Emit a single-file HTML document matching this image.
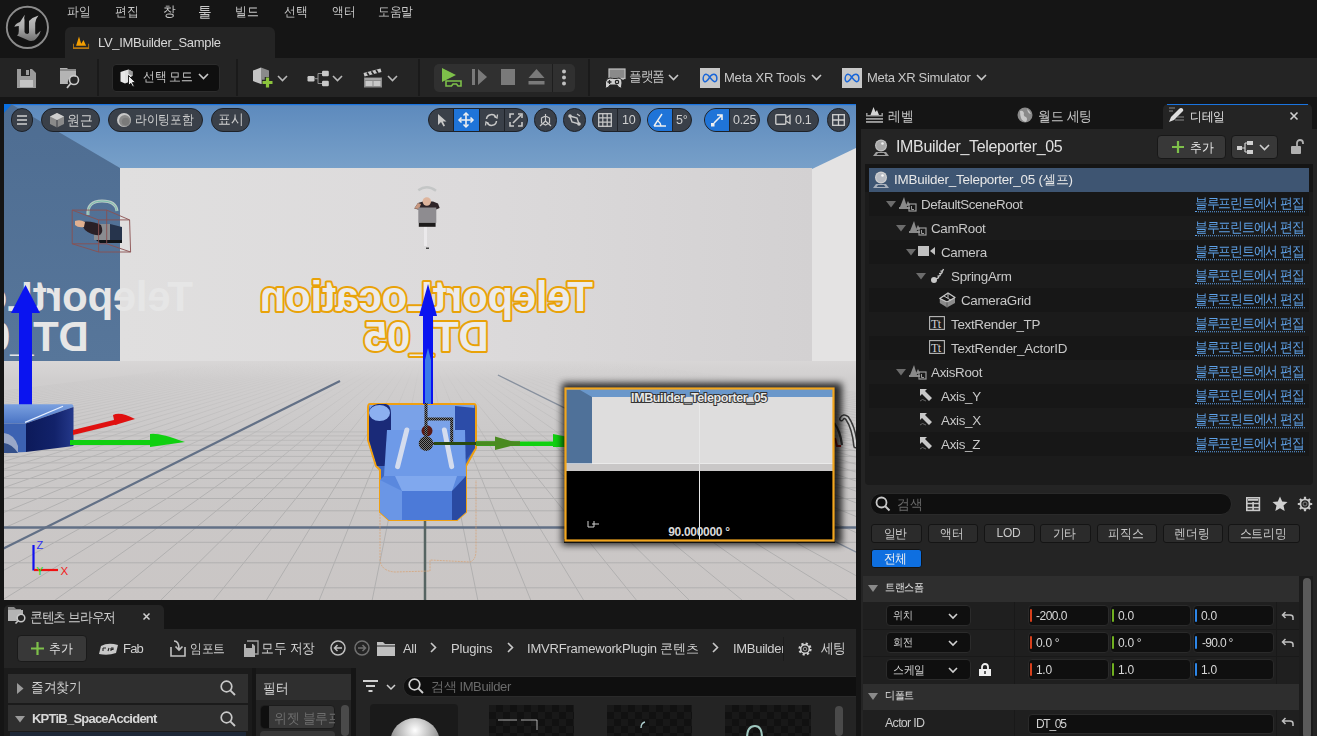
<!DOCTYPE html>
<html><head><meta charset="utf-8">
<style>
*{box-sizing:border-box;margin:0;padding:0}
html,body{width:1317px;height:736px;overflow:hidden;background:#151515;font-family:"Liberation Sans",sans-serif;color:#c0c0c0;font-size:13px;letter-spacing:-0.3px}
.a{position:absolute}
.t{position:absolute;white-space:nowrap;line-height:1;will-change:transform;padding:0 2px 4px 0}
svg{position:absolute;overflow:visible}
.lk{font-size:12.4px;color:#5fa2e8;border-bottom:1px dotted #5fa2e8;padding-bottom:1px}
.k{}
</style></head><body>
<!-- title bar -->
<div class="a" style="left:0;top:0;width:1317px;height:58px;background:#151515"></div>
<!-- UE logo -->
<svg style="left:0;top:0" width="56" height="56"><defs><linearGradient id="ug" x1="0" y1="0" x2="0" y2="1"><stop offset="0" stop-color="#c4c4c4"/><stop offset="0.5" stop-color="#a8a8a8"/><stop offset="1" stop-color="#707070"/></linearGradient></defs>
<circle cx="27.4" cy="27.4" r="20.6" fill="#131313" stroke="#8c8c8c" stroke-width="1.9"/>
<path d="M14.3 26.8Q16 23 20 22L24.8 14.8Q23.8 18 24.5 20L24.5 32Q25 34 27.5 34L29 33L29 21Q33 17 38.5 15.5Q35.5 19 35.2 23L35.2 33Q35.5 35.5 37 34L40.7 30.8Q39 37 34 40.5Q30 41.5 27.5 40Q23 38 17 35.5Q19 34 18.8 31L18.8 26Q17 26 14.3 26.8Z" fill="url(#ug)"/>
</svg>
<!-- menu -->
<div class="t" style="left:67.0px;top:5px;font-size:12.11px;color:#c8c8c8;transform:scaleY(1.1);transform-origin:0 10%">파일</div>
<div class="t" style="left:115.4px;top:5px;font-size:11.98px;color:#c8c8c8;transform:scaleY(1.1);transform-origin:0 10%">편집</div>
<div class="t" style="left:163.0px;top:5px;font-size:12.46px;color:#c8c8c8;transform:scaleY(1.1);transform-origin:0 10%">창</div>
<div class="t" style="left:198.0px;top:5px;font-size:13.5px;color:#c8c8c8;transform:scaleY(1.1);transform-origin:0 10%">툴</div>
<div class="t" style="left:235.0px;top:5px;font-size:12.16px;color:#c8c8c8;transform:scaleY(1.1);transform-origin:0 10%">빌드</div>
<div class="t" style="left:284.0px;top:5px;font-size:12.19px;color:#c8c8c8;transform:scaleY(1.1);transform-origin:0 10%">선택</div>
<div class="t" style="left:332.1px;top:5px;font-size:12.16px;color:#c8c8c8;transform:scaleY(1.1);transform-origin:0 10%">액터</div>
<div class="t" style="left:378.3px;top:5px;font-size:12.01px;color:#c8c8c8;transform:scaleY(1.1);transform-origin:0 10%">도움말</div>
<!-- level tab -->
<div class="a" style="left:65px;top:27px;width:210px;height:31px;background:#242424;border-radius:6px 6px 0 0"></div>
<svg style="left:72px;top:36px" width="18" height="14"><path d="M4.1 9.8L7 0.4L9.2 7.8L11.5 3.9L14.1 9.8Z" fill="#f59f00"/><path d="M1 7.8V13H17.1V7.8H16.2V11.2H1.9V7.8Z" fill="#b87810"/></svg>
<div class="t" style="left:98.0px;top:36px;font-size:13px;color:#d8d8d8;letter-spacing:-0.3px">LV_IMBuilder_Sample</div>

<!-- toolbar -->
<div class="a" style="left:0;top:58px;width:1317px;height:39px;background:#242424"></div>


<!-- toolbar content -->
<svg style="left:17px;top:69px" width="19" height="19"><path d="M0 0H15L19 4V19H0Z" fill="#9a9a9a"/><rect x="4" y="0" width="9" height="7" fill="#242424"/><rect x="9" y="1" width="3" height="5" fill="#9a9a9a"/><rect x="3" y="11" width="13" height="7" fill="#c4c4c4"/></svg>
<svg style="left:60px;top:68px" width="22" height="21"><path d="M0 0H7L9 2H16V9A6 6 0 0 0 8 16H0Z" fill="#b4b4b4"/><path d="M0 2H16" stroke="#8a8a8a" stroke-width="2"/><circle cx="14" cy="12" r="4.5" fill="none" stroke="#c8c8c8" stroke-width="1.6"/><path d="M11 15L7 20" stroke="#c8c8c8" stroke-width="1.8"/></svg>
<div class="a" style="left:97px;top:59px;width:2px;height:37px;background:#1a1a1a"></div>
<div class="a" style="left:112px;top:64px;width:108px;height:28px;background:#0f0f0f;border:1px solid #2c2c2c;border-radius:4px"></div>
<svg style="left:120px;top:69px" width="16" height="19"><path d="M0.5 3L5 1.5V14.5L0.5 12.5Z" fill="#e8e8e8"/><path d="M5 1.5L8.5 0.5L12.5 2.5V7L9 9V13L5 14.5Z" fill="#e0e0e0"/><path d="M8.5 0.5L12.5 2.5V7L8.5 5Z" fill="#9a9a9a"/><path d="M8.5 6.5V16.5L10.8 14.3L12.8 18L14.3 17.3L12.4 13.6H15.5Z" fill="#f0f0f0" stroke="#0f0f0f" stroke-width="0.9"/></svg>
<div class="t" style="left:142.5px;top:70px;font-size:12.15px;color:#c8c8c8;transform:scaleY(1.1);transform-origin:0 10%">선택 모드</div>
<svg style="left:198px;top:73px" width="11" height="7"><path d="M1 1L5.5 5.5L10 1" fill="none" stroke="#c8c8c8" stroke-width="1.6"/></svg>
<div class="a" style="left:236px;top:59px;width:2px;height:37px;background:#1a1a1a"></div>
<svg style="left:252px;top:67px" width="24" height="22"><path d="M1 3.5L9 0.5V17L1 14Z" fill="#c4c4c4"/><path d="M9 0.5L17 3.5V10H14V17H9Z" fill="#8a8a8a"/><path d="M15.5 10V21M10 15.5H21" stroke="#242424" stroke-width="5.5"/><path d="M15.5 10.5V20.5M10.5 15.5H20.5" stroke="#8cc43c" stroke-width="3.2"/></svg>
<svg style="left:277px;top:75px" width="11" height="7"><path d="M1 1L5.5 5.5L10 1" fill="none" stroke="#b8b8b8" stroke-width="1.6"/></svg>
<svg style="left:307px;top:70px" width="22" height="17"><rect x="0.5" y="6" width="7" height="5.5" rx="1.2" fill="#c8c8c8"/><rect x="15" y="0.8" width="6.8" height="5.5" rx="1.2" fill="#c8c8c8"/><rect x="15" y="10.8" width="6.8" height="5.5" rx="1.2" fill="#c8c8c8"/><path d="M7.5 8.7H11M11 3.5V13.5M11 3.5H15M11 13.5H15" fill="none" stroke="#909090" stroke-width="1"/></svg>
<svg style="left:332px;top:75px" width="11" height="7"><path d="M1 1L5.5 5.5L10 1" fill="none" stroke="#b8b8b8" stroke-width="1.6"/></svg>
<svg style="left:363px;top:67px" width="20" height="21"><path d="M0.5 6L17.5 1.5L18.5 5L1.5 9.5Z" fill="#c8c8c8"/><path d="M4 5.5L6 8.5M8.5 4.2L10.5 7.2M13 3L15 6" stroke="#242424" stroke-width="1.6"/><rect x="1" y="10.5" width="18" height="10" fill="#8a8a8a"/><rect x="2.5" y="14" width="7" height="5" fill="#c8c8c8"/><rect x="10.5" y="14" width="7" height="5" fill="#c8c8c8"/><path d="M2 12H18" stroke="#c8c8c8" stroke-width="0.8"/></svg>
<svg style="left:387px;top:75px" width="11" height="7"><path d="M1 1L5.5 5.5L10 1" fill="none" stroke="#b8b8b8" stroke-width="1.6"/></svg>
<div class="a" style="left:418px;top:59px;width:2px;height:37px;background:#1a1a1a"></div>
<div class="a" style="left:434px;top:64px;width:141px;height:28px;background:#303030;border-radius:5px"></div>
<div class="a" style="left:552px;top:64px;width:1px;height:28px;background:#1e1e1e"></div>
<svg style="left:441px;top:67px" width="22" height="22"><path d="M1 1L15 8L1 15Z" fill="#7ec04a"/><path d="M5 14H20V19H17L15.5 17H12L10.5 19H5Z" fill="none" stroke="#7ec04a" stroke-width="1.6"/></svg>
<svg style="left:472px;top:69px" width="16" height="16"><rect x="0" y="0" width="3" height="16" fill="#7a7a7a"/><path d="M6 0L15 8L6 16Z" fill="#7a7a7a"/></svg>
<svg style="left:501px;top:69px" width="15" height="16"><rect x="0" y="0" width="14" height="16" fill="#7a7a7a"/></svg>
<svg style="left:528px;top:69px" width="17" height="16"><path d="M8.5 0L16.5 9H0.5Z" fill="#7a7a7a"/><rect x="0.5" y="12" width="16" height="3.5" fill="#7a7a7a"/></svg>
<svg style="left:561px;top:69px" width="6" height="17"><circle cx="3" cy="2.5" r="2" fill="#c0c0c0"/><circle cx="3" cy="8.5" r="2" fill="#c0c0c0"/><circle cx="3" cy="14.5" r="2" fill="#c0c0c0"/></svg>
<div class="a" style="left:588px;top:59px;width:2px;height:37px;background:#1a1a1a"></div>
<svg style="left:604px;top:68px" width="22" height="22"><rect x="5" y="1" width="16" height="9.5" fill="#8a8a8a" stroke="#c0c0c0" stroke-width="1.2"/><path d="M17 11.5H20" stroke="#8a8a8a" stroke-width="1"/><path d="M1.5 14Q2.5 10 6 10Q8.5 10.5 11 10.5Q13.5 10.5 15 10Q18.5 10.5 18 15L17.5 19Q16.5 21 14.5 19L13 17H6L4.5 19Q2.5 21 1.5 19Z" fill="#d0d0d0" stroke="#242424" stroke-width="1"/><path d="M3.5 14H7.5M5.5 12V16" stroke="#242424" stroke-width="1.3"/><circle cx="13" cy="14" r="1.7" fill="none" stroke="#242424" stroke-width="1.2"/></svg>
<div class="t" style="left:629.0px;top:70px;font-size:12.32px;color:#c8c8c8;transform:scaleY(1.1);transform-origin:0 10%">플랫폼</div>
<svg style="left:668px;top:74px" width="11" height="7"><path d="M1 1L5.5 5.5L10 1" fill="none" stroke="#c8c8c8" stroke-width="1.6"/></svg>
<div class="a" style="left:700px;top:68px;width:20px;height:20px;background:#c8c8c8"></div>
<svg style="left:702px;top:73px" width="16" height="10"><path d="M8 4.5C6.5 2 5 1 3.8 1.2C1.8 1.6 1 4.5 1.2 6.5C1.4 8.5 3 9.2 4.5 8.2C6 7.2 7.5 4.5 8.5 3C9.5 1.8 10.5 1.1 12 1.2C14 1.5 15 4 14.8 6.3C14.6 8.5 13 9.2 11.5 8.2C10 7.2 9 5.5 8 4.5" fill="none" stroke="#1a66d8" stroke-width="1.5"/></svg>
<div class="t" style="left:724.2px;top:71px;font-size:13px;color:#c8c8c8;letter-spacing:-0.21px">Meta XR Tools</div>
<svg style="left:811px;top:74px" width="11" height="7"><path d="M1 1L5.5 5.5L10 1" fill="none" stroke="#c8c8c8" stroke-width="1.6"/></svg>
<div class="a" style="left:842px;top:68px;width:20px;height:20px;background:#c8c8c8"></div>
<svg style="left:844px;top:73px" width="16" height="10"><path d="M8 4.5C6.5 2 5 1 3.8 1.2C1.8 1.6 1 4.5 1.2 6.5C1.4 8.5 3 9.2 4.5 8.2C6 7.2 7.5 4.5 8.5 3C9.5 1.8 10.5 1.1 12 1.2C14 1.5 15 4 14.8 6.3C14.6 8.5 13 9.2 11.5 8.2C10 7.2 9 5.5 8 4.5" fill="none" stroke="#1a66d8" stroke-width="1.5"/></svg>
<div class="t" style="left:866.5px;top:71px;font-size:13px;color:#c8c8c8;letter-spacing:-0.33px">Meta XR Simulator</div>
<svg style="left:976px;top:74px" width="11" height="7"><path d="M1 1L5.5 5.5L10 1" fill="none" stroke="#c8c8c8" stroke-width="1.6"/></svg>

<!-- viewport -->
<svg style="left:4px;top:104px;overflow:hidden" width="852" height="496" viewBox="4 104 852 496">
<defs>
<linearGradient id="sky" x1="0" y1="0" x2="0" y2="1"><stop offset="0" stop-color="#5d8abd"/><stop offset="1" stop-color="#7aa2ca"/></linearGradient>
<linearGradient id="wall" x1="0" y1="0" x2="1" y2="0"><stop offset="0" stop-color="#e0dfdf"/><stop offset="0.5" stop-color="#dcdadb"/><stop offset="1" stop-color="#d3d1d2"/></linearGradient>
<linearGradient id="floor" x1="0" y1="0" x2="0" y2="1"><stop offset="0" stop-color="#d8d6d6"/><stop offset="0.08" stop-color="#d0cece"/><stop offset="0.3" stop-color="#cbc9c9"/><stop offset="1" stop-color="#cac6c5"/></linearGradient>
<linearGradient id="lwall" x1="0" y1="0" x2="0" y2="1"><stop offset="0" stop-color="#4e6d92"/><stop offset="1" stop-color="#57769a"/></linearGradient>
<linearGradient id="gl" gradientUnits="userSpaceOnUse" x1="0" y1="361" x2="0" y2="600"><stop offset="0" stop-color="#cdcbcb" stop-opacity="0"/><stop offset="0.1" stop-color="#bcbbbb" stop-opacity="0.2"/><stop offset="0.3" stop-color="#b6b5b5" stop-opacity="0.7"/><stop offset="0.5" stop-color="#b2b1b1"/><stop offset="1" stop-color="#b0afaf"/></linearGradient>
</defs>
<rect x="4" y="104" width="852" height="70" fill="url(#sky)"/>
<rect x="4" y="104" width="852" height="1.2" fill="#1a74e0"/>
<path d="M4 104H11L120 168V362H4Z" fill="url(#lwall)"/>
<path d="M4 104H12L4 113Z" fill="#0a6fe0"/>
<rect x="120" y="168" width="692" height="194" fill="url(#wall)"/>
<path d="M812 169L856 148V362H812Z" fill="#e4e3e3"/>
<rect x="4" y="361" width="852" height="239" fill="url(#floor)"/>
<g stroke="url(#gl)" stroke-width="1" fill="none">
<path d="M4 587.8H856M4 562.8H856M4 542.3H856M4 510.8H856M4 498.5H856M4 487.8H856M4 478.5H856M4 470.2H856M4 462.9H856M4 456.4H856M4 450.5H856M4 445.2H856M4 440.3H856M4 435.9H856M4 431.9H856"/>
<path d="M246.9 361L-1688.1 600M251.3 361L-1635.2 600M255.8 361L-1582.4 600M260.2 361L-1529.6 600M264.7 361L-1476.8 600M269.2 361L-1423.9 600M273.6 361L-1371.1 600M278.1 361L-1318.3 600M282.5 361L-1265.4 600M287.0 361L-1212.6 600M291.4 361L-1159.8 600M295.9 361L-1107.0 600M300.3 361L-1054.1 600M304.8 361L-1001.3 600M309.2 361L-948.5 600M313.7 361L-895.7 600M318.1 361L-842.8 600M322.6 361L-790.0 600M327.0 361L-737.2 600M331.5 361L-684.4 600M335.9 361L-631.5 600M340.4 361L-578.7 600M344.8 361L-525.9 600M349.3 361L-473.0 600M353.8 361L-420.2 600M358.2 361L-367.4 600M362.7 361L-314.6 600M367.1 361L-261.7 600M371.6 361L-208.9 600M376.0 361L-156.1 600M384.9 361L-50.4 600M389.4 361L2.4 600M393.8 361L55.2 600M398.3 361L108.0 600M402.7 361L160.9 600M407.2 361L213.7 600M411.6 361L266.5 600M416.1 361L319.3 600M420.5 361L372.2 600M429.5 361L477.8 600M433.9 361L530.7 600M438.4 361L583.5 600M442.8 361L636.3 600M447.3 361L689.1 600M451.7 361L742.0 600M456.2 361L794.8 600M460.6 361L847.6 600M465.1 361L900.4 600M474.0 361L1006.1 600M478.4 361L1058.9 600M482.9 361L1111.7 600M487.3 361L1164.6 600M491.8 361L1217.4 600M496.2 361L1270.2 600M500.7 361L1323.0 600M505.2 361L1375.9 600M509.6 361L1428.7 600M514.1 361L1481.5 600M518.5 361L1534.4 600M523.0 361L1587.2 600M527.4 361L1640.0 600M531.9 361L1692.8 600M536.3 361L1745.7 600M540.8 361L1798.5 600M545.2 361L1851.3 600M549.7 361L1904.1 600M554.1 361L1957.0 600M558.6 361L2009.8 600M563.0 361L2062.6 600M567.5 361L2115.4 600M571.9 361L2168.3 600M576.4 361L2221.1 600M580.8 361L2273.9 600M585.3 361L2326.8 600M589.8 361L2379.6 600M594.2 361L2432.4 600M598.7 361L2485.2 600M603.1 361L2538.1 600"/>
</g>
<path d="M4 527.5H856" stroke="#627086" stroke-width="2.4"/>
<path d="M-100 600L340 381" stroke="#627086" stroke-width="2.2"/>
<path d="M953.3 600L497.9 375" stroke="#7b8696" stroke-width="1.3" opacity="0.85"/>
<path d="M425 520V600" stroke="#566462" stroke-width="2.5"/>

<!-- mirrored texts -->
<g font-family="Liberation Sans" font-weight="bold" font-size="42" text-anchor="middle">
<g transform="translate(853,0) scale(-1,1)">
<text x="426.5" y="311" fill="#ecebeb" stroke="#e9a208" stroke-width="4" paint-order="stroke" stroke-linejoin="round">TeleportLocation</text>
<text x="426.5" y="351" fill="#ecebeb" stroke="#e9a208" stroke-width="4" paint-order="stroke" stroke-linejoin="round">DT_05</text>
</g>
<g transform="translate(53,0) scale(-1,1)">
<text x="26.5" y="311" fill="#e6e6e6">TeleportLocation</text>
<text x="26.5" y="351" fill="#e6e6e6">DT_05</text>
</g>
</g>
<!-- left blue actor -->
<path d="M19 313H32V405H19Z" fill="#0a14f0"/>
<path d="M25.5 285L40 313H11Z" fill="#0a14f0"/>
<defs><linearGradient id="bt" x1="0" y1="0" x2="0" y2="1"><stop offset="0" stop-color="#7aa0e0"/><stop offset="1" stop-color="#4a74c4"/></linearGradient>
<linearGradient id="bf" x1="0" y1="0" x2="1" y2="0"><stop offset="0" stop-color="#0c1a5a"/><stop offset="0.6" stop-color="#12226a"/><stop offset="1" stop-color="#24388a"/></linearGradient></defs>
<path d="M4 404.3H72Q73.5 404.5 73.5 407L26 423.5H4Z" fill="url(#bt)"/>
<path d="M26 423.5L73.5 407V446L26 452Z" fill="url(#bf)"/>
<path d="M4 423.5H26V452L4 453Z" fill="#3c62b2"/>
<path d="M25 422.4L63 406.2" stroke="#e8f0ff" stroke-width="1.2"/>
<path d="M4 433Q14 434 18 446V453H4Z" fill="#9aa8c8"/>
<path d="M4 443Q12 444 18 453H4Z" fill="#34508a"/>
<!-- red arrow -->
<path d="M73 430L118 419L118 424L73 435Z" fill="#e01010"/>
<path d="M113 415Q120 411 135 419L115 425Z" fill="#e01010"/>
<!-- green arrow -->
<path d="M70 440H150V445H70Z" fill="#10d010"/>
<path d="M150 434Q158 432 185 442L150 447Z" fill="#10d010"/>
<!-- camera object -->
<path d="M88 215Q87 201 102 201Q116 201 117 211" fill="none" stroke="#b8c8c4" stroke-width="3"/>
<path d="M88 215Q87 201 102 201Q116 201 117 211" fill="none" stroke="#6ec0a8" stroke-width="1" opacity="0.8"/>
<path d="M94 224H110V240H94Z" fill="#8a8c90"/>
<path d="M110 224L122 227V243L110 240Z" fill="#26344c"/>
<path d="M96 240H122V243H100Z" fill="#101418"/>
<path d="M80 222Q92 220 101 225Q104 232 100 235Q92 236 85 230Z" fill="#2a2026"/>
<path d="M75 221Q80 219 85 222L84 227Q78 228 75 225Z" fill="#e0b090"/>
<g fill="none" stroke="#8a5050" stroke-width="0.9">
<path d="M72.2 210.1H106.7L129.6 219.9H98.6Z"/>
<path d="M72.2 243.8H106.7L130.6 252H98.6Z"/>
<path d="M72.2 210.1V243.8M106.7 210.1V243.8M98.6 219.9V252M129.6 219.9L130.6 252"/>
</g>
<!-- character -->
<path d="M418.3 190.2Q427 184 436 190.7" fill="none" stroke="#c4c6c6" stroke-width="2.5"/>
<path d="M425.5 224V246" stroke="#ebe9eb" stroke-width="3"/>
<path d="M426 248.2H429" stroke="#222" stroke-width="1.2"/>
<path d="M414.3 208.5L418 203L423 201.5H433L438 203.5L439.7 208L436 209.5H418Z" fill="#2e2428"/>
<path d="M414.3 208.5L418 203L421 204L419 209Z" fill="#c89880"/>
<circle cx="426.8" cy="201.5" r="4.2" fill="#deb49c"/>
<rect x="418.3" y="207.5" width="18" height="15.3" fill="#8e8c90"/>
<rect x="418.8" y="222.8" width="16.8" height="4" fill="#1c1a1a"/>
<!-- center actor -->
<defs><pattern id="chk" width="2" height="2" patternUnits="userSpaceOnUse"><rect width="2" height="2" fill="#777"/><rect width="1" height="1" fill="#111"/><rect x="1" y="1" width="1" height="1" fill="#111"/></pattern></defs>
<path d="M378 448L380 470V560Q381 571 395 572L430 571V560L470 562Q476 560 476 550V480" fill="none" stroke="#d8a070" stroke-width="0.9" stroke-dasharray="2 1" opacity="0.8"/>
<path d="M370 404H474Q476 404 476 408V448L466 466V512L457 520H389L380 512V470L376 466L368 440V408Q368 404 370 404Z" fill="#3f68c0" stroke="#f0a010" stroke-width="2"/>
<path d="M369 405H474V448L460 458H380Z" fill="#7aa2e8"/>
<path d="M455 406L475 408V448L466 460L455 440Z" fill="#2c4ca8"/>
<path d="M369 414Q369 405 378 404H386Q391 405 391 414V466H377L369 440Z" fill="#1a2a78"/>
<ellipse cx="379.5" cy="413" rx="10.5" ry="8" fill="#8cb0f0"/>
<path d="M387 430H465L466 476H384Z" fill="#6e9ae8"/>
<path d="M384 476H466V512L457 520H389L380 512V480Z" fill="#5a88de"/>
<path d="M402 491H452L457 476H395Z" fill="#80a8ee"/>
<path d="M402 491H452V520H402Z" fill="#4c7ad8"/>
<path d="M452 491L466 476V512L457 520H452Z" fill="#2a4aa2"/>
<path d="M380 480L402 491V520H389L380 512Z" fill="#6a96e6"/>
<path d="M397.6 466.6L406.8 430" stroke="#d4dcee" stroke-width="5" stroke-linecap="round"/>
<path d="M451.7 466.6L444.4 430" stroke="#d4dcee" stroke-width="5" stroke-linecap="round"/>
<!-- center arrows -->
<path d="M423 315H433V404H423Z" fill="#0a14f0"/>
<path d="M428 284L437 316H419Z" fill="#0a14f0"/>
<path d="M425 360L428 348L431 360V404H425Z" fill="#3a7ae8"/>
<circle cx="427" cy="430.8" r="5.5" fill="#5a1a14"/>
<path d="M426 403V440M426 419H451.7V443.6H433" fill="none" stroke="url(#chk)" stroke-width="3"/>
<path d="M434 443.6H476" stroke="#2a4a10" stroke-width="3"/>
<circle cx="426" cy="443.6" r="7.3" fill="url(#chk)"/>
<path d="M476 441.5H565V446H476Z" fill="#10d010"/>
<path d="M476 443.6H520" stroke="#4a8a20" stroke-width="4.5"/>
<path d="M495 436.5L520 443.6L495 450Z" fill="#4a8a20"/>
<path d="M553 434L568 437V447H553Z" fill="#10d010"/>
<!-- right side arcs -->
<path d="M841.5 419Q843.5 415 847 418Q854 428 855.6 446" fill="none" stroke="#3a3a3a" stroke-width="5" stroke-linecap="round"/>
<path d="M841.5 419Q843.5 415 847 418Q854 428 855.6 446" fill="none" stroke="#d0d0d0" stroke-width="2" stroke-linecap="round"/>
<path d="M834 423Q840 430 842 445" fill="none" stroke="#3a3a3a" stroke-width="2.2"/>
<path d="M835 438L837 446H841" fill="none" stroke="#a01010" stroke-width="2"/>
<!-- preview window -->
<filter id="blr" x="-20%" y="-20%" width="140%" height="140%"><feGaussianBlur stdDeviation="3.5"/></filter>
<rect x="562" y="383" width="280" height="162" fill="#000" opacity="0.8" filter="url(#blr)"/>
<rect x="564" y="539" width="271" height="4" fill="#111"/>
<rect x="565" y="388" width="269" height="153" fill="#000"/>
<rect x="566" y="389" width="267" height="9" fill="#6a97ca"/>
<rect x="592" y="397" width="241" height="67" fill="#dedddd"/>
<path d="M566 390L580 390L592 397V465H566Z" fill="#4f7199"/>
<rect x="566" y="464" width="267" height="7" fill="#c9c7c7"/>
<rect x="566" y="463" width="267" height="1" fill="#f0f0f0" opacity="0.7"/>
<path d="M699.5 390V540" stroke="#e8e8e8" stroke-width="1"/>
<rect x="565.5" y="388.5" width="268" height="152" fill="none" stroke="#f2a61e" stroke-width="2.2"/>
<text x="699" y="402" font-family="Liberation Sans" font-weight="bold" font-size="12.5" fill="#e8e8e8" stroke="#333" stroke-width="2" paint-order="stroke" text-anchor="middle" letter-spacing="-0.4">IMBuilder_Teleporter_05</text>
<text x="699" y="536" font-family="Liberation Sans" font-weight="bold" font-size="12" fill="#d8d8d8" text-anchor="middle">90.000000 °</text>
<path d="M588 521V527H594M592 524H599M594 521V527" fill="none" stroke="#d0d0d0" stroke-width="1"/>
<!-- axis indicator -->
<path d="M33.5 545V570.5" fill="none" stroke="#1010f0" stroke-width="2.2"/>
<path d="M34 570H58" stroke="#f01010" stroke-width="2.2"/>
<text x="36.5" y="549" font-family="Liberation Sans" font-size="11" fill="#3030f0">Z</text>
<text x="36.5" y="574.5" font-family="Liberation Sans" font-size="10" fill="#20e020">Y</text>
<text x="60.5" y="574.5" font-family="Liberation Sans" font-size="11.5" fill="#f02020">X</text>
</svg>

<!-- viewport toolbar -->
<div class="a" style="left:11px;top:108px;width:22px;height:24px;background:#3a4049;border:1px solid #1d2128;border-radius:12px"></div>
<svg style="left:16px;top:114px" width="12" height="12"><path d="M1 2H11M1 6H11M1 10H11" stroke="#d0d0d0" stroke-width="1.3"/></svg>
<div class="a" style="left:41px;top:108px;width:59px;height:24px;background:#3a4049;border:1px solid #1d2128;border-radius:12px"></div>
<svg style="left:49px;top:112px" width="16" height="16"><path d="M8 1L15 4.5V12L8 15.5L1 12V4.5Z" fill="#8a8a8a"/><path d="M8 1L15 4.5L8 8L1 4.5Z" fill="#cfcfcf"/><path d="M8 8V15.5" stroke="#383b42" stroke-width="1"/></svg>
<div class="t" style="left:67.2px;top:113px;font-size:13.11px;color:#d0d0d0;transform:scaleY(1.1);transform-origin:0 10%">원근</div>
<div class="a" style="left:108px;top:108px;width:95px;height:24px;background:#3a4049;border:1px solid #1d2128;border-radius:12px"></div>
<svg style="left:116px;top:112px" width="16" height="16"><circle cx="8" cy="8" r="7" fill="#c8c8c8"/><circle cx="8.8" cy="8.8" r="5.8" fill="#8a8a8a"/><circle cx="9.6" cy="9.6" r="3.8" fill="#7a7a7a"/></svg>
<div class="t" style="left:135.2px;top:113px;font-size:11.65px;color:#d0d0d0;transform:scaleY(1.1);transform-origin:0 10%">라이팅포함</div>
<div class="a" style="left:211px;top:108px;width:39px;height:24px;background:#3a4049;border:1px solid #1d2128;border-radius:12px"></div>
<div class="t" style="left:217.7px;top:113px;font-size:12.55px;color:#d0d0d0;transform:scaleY(1.1);transform-origin:0 10%">표시</div>
<div class="a" style="left:428px;top:108px;width:100px;height:24px;background:#3a4049;border:1px solid #1d2128;border-radius:12px"></div>
<div class="a" style="left:454px;top:109px;width:25px;height:22px;background:#1f74d8"></div>
<div class="a" style="left:453px;top:108px;width:1px;height:24px;background:#1f2329"></div><div class="a" style="left:479px;top:108px;width:1px;height:24px;background:#1f2329"></div><div class="a" style="left:504px;top:108px;width:1px;height:24px;background:#1f2329"></div>
<svg style="left:437px;top:113px" width="10" height="14"><path d="M1 1V12L4 9L6.5 13.5L8 12.8L5.8 8.5H9.5Z" fill="#c8c8c8"/></svg>
<svg style="left:458px;top:112px" width="16" height="16"><path d="M8 1V15M1 8H15" stroke="#f0f0f0" stroke-width="1.6"/><path d="M5.5 3.5L8 1L10.5 3.5M5.5 12.5L8 15L10.5 12.5M3.5 5.5L1 8L3.5 10.5M12.5 5.5L15 8L12.5 10.5" fill="none" stroke="#f0f0f0" stroke-width="1.5"/></svg>
<svg style="left:484px;top:113px" width="15" height="14"><path d="M2.5 6A5 5 0 0 1 12 4.5M12.5 8A5 5 0 0 1 3 9.5" fill="none" stroke="#c8c8c8" stroke-width="1.5"/><path d="M10 3.5L13 5L13.5 1.5M5 10.5L2 9L1.5 12.5" fill="none" stroke="#c8c8c8" stroke-width="1.3"/></svg>
<svg style="left:509px;top:113px" width="14" height="14"><path d="M1 5V1H5M9 13H13V9" fill="none" stroke="#c8c8c8" stroke-width="1.6"/><path d="M13 5V1H9M1 9V13H5" fill="none" stroke="#c8c8c8" stroke-width="1.6"/><path d="M4 10L12 2" stroke="#c8c8c8" stroke-width="1.6"/></svg>
<div class="a" style="left:534px;top:108px;width:23px;height:24px;background:#3a4049;border:1px solid #1d2128;border-radius:12px"></div>
<svg style="left:538px;top:113px" width="15" height="15"><path d="M7.5 1V8M7.5 8L2 13M7.5 8L13 13M3.5 5L7.5 3L11.5 5V10L7.5 12L3.5 10Z" fill="none" stroke="#c8c8c8" stroke-width="1.2"/></svg>
<div class="a" style="left:563px;top:108px;width:23px;height:24px;background:#3a4049;border:1px solid #1d2128;border-radius:12px"></div>
<svg style="left:567px;top:113px" width="15" height="15"><path d="M3 3L10 5L12 11L5 9Z" fill="none" stroke="#c8c8c8" stroke-width="1.4"/><circle cx="3" cy="3" r="1.8" fill="#c8c8c8"/><circle cx="12" cy="11" r="1.8" fill="#c8c8c8"/><path d="M10 1L13 3" stroke="#c8c8c8" stroke-width="1.2"/></svg>
<div class="a" style="left:592px;top:108px;width:49px;height:24px;background:#3a4049;border:1px solid #1d2128;border-radius:12px"></div>
<div class="a" style="left:617px;top:108px;width:1px;height:24px;background:#1f2329"></div>
<svg style="left:598px;top:113px" width="14" height="14"><rect x="0.7" y="0.7" width="12.6" height="12.6" fill="none" stroke="#c8c8c8" stroke-width="1.3"/><path d="M4.8 0V14M9.2 0V14M0 4.8H14M0 9.2H14" stroke="#c8c8c8" stroke-width="1.2"/></svg>
<div class="t" style="left:622px;top:114px;font-size:12.5px;color:#d0d0d0">10</div>
<div class="a" style="left:647px;top:108px;width:45px;height:24px;background:#3a4049;border:1px solid #1d2128;border-radius:12px"></div>
<div class="a" style="left:648px;top:109px;width:24px;height:22px;background:#1f74d8;border-radius:11px 0 0 11px"></div><div class="a" style="left:672px;top:108px;width:1px;height:24px;background:#1f2329"></div>
<svg style="left:652px;top:112px" width="15" height="15"><path d="M2 14H14M2 14L10 2M9 14A7 7 0 0 0 6 9" fill="none" stroke="#f0f0f0" stroke-width="1.4"/></svg>
<div class="t" style="left:676px;top:114px;font-size:12.5px;color:#d0d0d0">5°</div>
<div class="a" style="left:704px;top:108px;width:56px;height:24px;background:#3a4049;border:1px solid #1d2128;border-radius:12px"></div>
<div class="a" style="left:705px;top:109px;width:24px;height:22px;background:#1f74d8;border-radius:11px 0 0 11px"></div><div class="a" style="left:729px;top:108px;width:1px;height:24px;background:#1f2329"></div>
<svg style="left:710px;top:113px" width="14" height="14"><path d="M4 10L12 2M7 2H12V7" fill="none" stroke="#f0f0f0" stroke-width="1.6"/><rect x="1" y="10" width="3.5" height="3.5" fill="#f0f0f0"/></svg>
<div class="t" style="left:733px;top:114px;font-size:12.5px;color:#d0d0d0">0.25</div>
<div class="a" style="left:767px;top:108px;width:52px;height:24px;background:#3a4049;border:1px solid #1d2128;border-radius:12px"></div>
<svg style="left:775px;top:113px" width="16" height="13"><rect x="0.8" y="1.8" width="10" height="9.5" rx="1" fill="none" stroke="#c8c8c8" stroke-width="1.4"/><path d="M11 5L15 2.5V10.5L11 8" fill="none" stroke="#c8c8c8" stroke-width="1.4"/></svg>
<div class="t" style="left:795px;top:114px;font-size:12.5px;color:#d0d0d0">0.1</div>
<div class="a" style="left:827px;top:108px;width:23px;height:24px;background:#3a4049;border:1px solid #1d2128;border-radius:12px"></div>
<svg style="left:832px;top:114px" width="13" height="12"><rect x="0.7" y="0.7" width="11.6" height="10.6" fill="none" stroke="#d0d0d0" stroke-width="1.3"/><path d="M6.5 0V12M0 6H13" stroke="#d0d0d0" stroke-width="1.3"/></svg>

<!-- right panel -->

<!-- right panel -->
<div class="a" style="left:861px;top:98px;width:456px;height:31px;background:#151515"></div>
<svg style="left:866px;top:106px" width="17" height="18"><path d="M4.5 9L7.5 1L9.5 6L11 4L13 9Z" fill="#d4d4d4"/><path d="M0.8 7V9.8H16.2V7" fill="none" stroke="#9a9a9a" stroke-width="1.5"/><rect x="0" y="12" width="17" height="1.8" fill="#9a9a9a"/><rect x="0" y="15" width="17" height="1.9" fill="#9a9a9a"/></svg>
<div class="t k" style="left:888.0px;top:110px;font-size:12.5px;color:#c8c8c8;transform:scaleY(1.1);transform-origin:0 10%">레벨</div>
<svg style="left:1017px;top:107px" width="16" height="16"><circle cx="8" cy="8" r="7.5" fill="#8a8a8a"/><path d="M3 4Q6 3 7 6Q6 9 9 10Q11 12 9 15Q5 14 4 11Q3 8 3 4ZM10 2Q13 4 14 7Q12 7 11 5Z" fill="#c8c8c8"/></svg>
<div class="t k" style="left:1038.0px;top:110px;font-size:12.8px;color:#c8c8c8;transform:scaleY(1.1);transform-origin:0 10%">월드 세팅</div>
<div class="a" style="left:1163px;top:104px;width:149px;height:26px;background:#242424;border-radius:5px 5px 0 0"></div>
<div class="a" style="left:1167px;top:104px;width:141px;height:1px;background:#1a74e0"></div>
<svg style="left:1168px;top:107px" width="17" height="16"><path d="M1 15L3 10L11 2Q13 0 15 2Q16 4 14 5L6 13Z" fill="#e0e0e0"/><path d="M1 1H7M1 4H5M9 10H16M7 13H16" stroke="#8a8a8a" stroke-width="1.2"/></svg>
<div class="t k" style="left:1190.2px;top:110px;font-size:12.14px;color:#e8e8e8;transform:scaleY(1.1);transform-origin:0 10%">디테일</div>
<svg style="left:1290px;top:112px" width="8" height="8"><path d="M0.5 0.5L7.5 7.5M7.5 0.5L0.5 7.5" stroke="#d0d0d0" stroke-width="1.6"/></svg>
<div class="a" style="left:861px;top:129px;width:456px;height:607px;background:#242424"></div>
<svg style="left:872px;top:139px" width="18" height="18"><circle cx="9" cy="6.5" r="6" fill="#c0c0c0"/><circle cx="9" cy="6.5" r="4.8" fill="#a8a8a8"/><circle cx="10.5" cy="4.5" r="1.3" fill="#f0f0f0"/><path d="M4 13H14L17 17H1Z" fill="#a0a0a0"/><path d="M6 14H12L13.5 16H4.5Z" fill="#242424"/></svg>
<div class="t" style="left:896.0px;top:139px;font-size:16px;color:#e0e0e0;letter-spacing:-0.35px">IMBuilder_Teleporter_05</div>
<div class="a" style="left:1157px;top:135px;width:69px;height:24px;background:#383838;border:1px solid #181818;border-radius:4px"></div>
<svg style="left:1172px;top:141px" width="12" height="12"><path d="M6 0V12M0 6H12" stroke="#7ec04a" stroke-width="2.2"/></svg>
<div class="t k" style="left:1190.0px;top:142px;font-size:11.52px;color:#e8e8e8;transform:scaleY(1.1);transform-origin:0 10%">추가</div>
<div class="a" style="left:1231px;top:135px;width:47px;height:24px;background:#383838;border:1px solid #181818;border-radius:4px"></div>
<svg style="left:1237px;top:141px" width="16" height="13"><rect x="0" y="5" width="5" height="4" fill="#d0d0d0"/><rect x="10" y="0" width="6" height="4" fill="#d0d0d0"/><rect x="10" y="9" width="6" height="4" fill="#d0d0d0"/><path d="M5 7H8M8 2V11M8 2H10M8 11H10" stroke="#d0d0d0" stroke-width="1.2" fill="none"/></svg>
<svg style="left:1259px;top:144px" width="11" height="7"><path d="M1 1L5.5 5.5L10 1" fill="none" stroke="#d0d0d0" stroke-width="1.6"/></svg>
<svg style="left:1291px;top:139px" width="13" height="15"><path d="M6 7V4A3 3 0 0 1 12 4V5" fill="none" stroke="#b0b0b0" stroke-width="1.8"/><rect x="0" y="7" width="10" height="8" rx="1" fill="#b0b0b0"/></svg>
<div class="a" style="left:865px;top:164px;width:448px;height:321px;background:#1b1b1b;border-radius:0 0 4px 4px"></div>
<div class="a" style="left:865px;top:164px;width:448px;height:28px;background:#151515"></div>
<div class="a" style="left:869px;top:168px;width:440px;height:24px;background:#3e5572"></div>
<svg style="left:872px;top:171px" width="18" height="18"><circle cx="9" cy="6.5" r="6" fill="#d0d0d0"/><circle cx="9" cy="6.5" r="4.8" fill="#b8bcc4"/><circle cx="10.5" cy="4.5" r="1.3" fill="#f8f8f8"/><path d="M4 13H14L17 17H1Z" fill="#a8b0bc"/><path d="M6 14H12L13.5 16H4.5Z" fill="#3e5572"/></svg>
<div class="t" style="left:894.0px;top:173px;font-size:13.4px;color:#e8e8e8;letter-spacing:-0.21px">IMBuilder_Teleporter_05 (셀프)</div>
<div class="a" style="left:869px;top:192px;width:440px;height:24px;background:#171717"></div>
<svg style="left:886px;top:201px" width="10" height="7"><path d="M0 0H10L5 6.5Z" fill="#6c6c6c"/></svg>
<svg style="left:899px;top:196px" width="18" height="16"><path d="M1 11L5 1L8 11Z" fill="#8a8a8a"/><path d="M6 11L9 5L11 9" fill="#8a8a8a"/><rect x="0" y="11" width="11" height="2" fill="#8a8a8a"/><rect x="10" y="8" width="7" height="7" fill="none" stroke="#9a9a9a" stroke-width="1.2"/><path d="M12.5 10V13.5H15" stroke="#9a9a9a" stroke-width="1" fill="none"/></svg>
<div class="t" style="left:921.2px;top:198px;font-size:13.4px;color:#c8c8c8;letter-spacing:-0.44px">DefaultSceneRoot</div>
<div class="t lk" style="left:1195px;top:197px;transform:scaleY(1.1);transform-origin:0 10%">블루프린트에서 편집</div>
<div class="a" style="left:869px;top:216px;width:440px;height:24px;background:#1b1b1b"></div>
<svg style="left:896px;top:225px" width="10" height="7"><path d="M0 0H10L5 6.5Z" fill="#6c6c6c"/></svg>
<svg style="left:909px;top:220px" width="18" height="16"><path d="M1 11L5 1L8 11Z" fill="#8a8a8a"/><path d="M6 11L9 5L11 9" fill="#8a8a8a"/><rect x="0" y="11" width="11" height="2" fill="#8a8a8a"/><rect x="10" y="8" width="7" height="7" fill="none" stroke="#9a9a9a" stroke-width="1.2"/><path d="M12.5 10V13.5H15" stroke="#9a9a9a" stroke-width="1" fill="none"/></svg>
<div class="t" style="left:931px;top:222px;font-size:13.4px;color:#c8c8c8">CamRoot</div>
<div class="t lk" style="left:1195px;top:221px;transform:scaleY(1.1);transform-origin:0 10%">블루프린트에서 편집</div>
<div class="a" style="left:869px;top:240px;width:440px;height:24px;background:#171717"></div>
<svg style="left:906px;top:249px" width="10" height="7"><path d="M0 0H10L5 6.5Z" fill="#6c6c6c"/></svg>
<svg style="left:918px;top:244px" width="18" height="14"><rect x="0" y="2" width="11" height="10" fill="#c0c0c0"/><path d="M12 7L17 3V11Z" fill="#c0c0c0"/></svg>
<div class="t" style="left:941px;top:246px;font-size:13.4px;color:#c8c8c8">Camera</div>
<div class="t lk" style="left:1195px;top:245px;transform:scaleY(1.1);transform-origin:0 10%">블루프린트에서 편집</div>
<div class="a" style="left:869px;top:264px;width:440px;height:24px;background:#1b1b1b"></div>
<svg style="left:916px;top:273px" width="10" height="7"><path d="M0 0H10L5 6.5Z" fill="#6c6c6c"/></svg>
<svg style="left:930px;top:268px" width="16" height="16"><circle cx="4" cy="12" r="3" fill="#c8c8c8"/><path d="M6 10.5Q8 11 9 8.5M7.5 8Q10 8.5 11 6M9 5.5Q12 6 12.5 3.5M10.5 3Q13 3.5 13.5 1" fill="none" stroke="#c8c8c8" stroke-width="1.3"/></svg>
<div class="t" style="left:951px;top:270px;font-size:13.4px;color:#c8c8c8">SpringArm</div>
<div class="t lk" style="left:1195px;top:269px;transform:scaleY(1.1);transform-origin:0 10%">블루프린트에서 편집</div>
<div class="a" style="left:869px;top:288px;width:440px;height:24px;background:#171717"></div>
<svg style="left:939px;top:292px" width="17" height="17"><path d="M0.8 6.5L9 1L16 5.5V11L8 15.5L0.8 11Z" fill="#8a8a8a"/><path d="M0.8 6.5L9 1L16 5.5L8 10Z" fill="#151515" stroke="#c8c8c8" stroke-width="1.3" stroke-linejoin="round"/><path d="M5 4L12 8.2M9 1.5V6" stroke="#c8c8c8" stroke-width="1"/><path d="M8 10V15.5" stroke="#5a5a5a" stroke-width="1"/></svg>
<div class="t" style="left:961px;top:294px;font-size:13.4px;color:#c8c8c8">CameraGrid</div>
<div class="t lk" style="left:1195px;top:293px;transform:scaleY(1.1);transform-origin:0 10%">블루프린트에서 편집</div>
<div class="a" style="left:869px;top:312px;width:440px;height:24px;background:#1b1b1b"></div>
<svg style="left:929px;top:316px" width="16" height="14"><rect x="0.6" y="0.6" width="14.8" height="12.8" fill="none" stroke="#b8b8b8" stroke-width="1.1"/><text x="2" y="11.5" font-family="Liberation Serif" font-size="12" fill="#d0d0d0" letter-spacing="-0.5">Tt</text></svg>
<div class="t" style="left:951px;top:318px;font-size:13.4px;color:#c8c8c8">TextRender_TP</div>
<div class="t lk" style="left:1195px;top:317px;transform:scaleY(1.1);transform-origin:0 10%">블루프린트에서 편집</div>
<div class="a" style="left:869px;top:336px;width:440px;height:24px;background:#171717"></div>
<svg style="left:929px;top:340px" width="16" height="14"><rect x="0.6" y="0.6" width="14.8" height="12.8" fill="none" stroke="#b8b8b8" stroke-width="1.1"/><text x="2" y="11.5" font-family="Liberation Serif" font-size="12" fill="#d0d0d0" letter-spacing="-0.5">Tt</text></svg>
<div class="t" style="left:951.0px;top:342px;font-size:13.4px;color:#c8c8c8;letter-spacing:-0.24px">TextRender_ActorID</div>
<div class="t lk" style="left:1195px;top:341px;transform:scaleY(1.1);transform-origin:0 10%">블루프린트에서 편집</div>
<div class="a" style="left:869px;top:360px;width:440px;height:24px;background:#1b1b1b"></div>
<svg style="left:896px;top:369px" width="10" height="7"><path d="M0 0H10L5 6.5Z" fill="#6c6c6c"/></svg>
<svg style="left:909px;top:364px" width="18" height="16"><path d="M1 11L5 1L8 11Z" fill="#8a8a8a"/><path d="M6 11L9 5L11 9" fill="#8a8a8a"/><rect x="0" y="11" width="11" height="2" fill="#8a8a8a"/><rect x="10" y="8" width="7" height="7" fill="none" stroke="#9a9a9a" stroke-width="1.2"/><path d="M12.5 10V13.5H15" stroke="#9a9a9a" stroke-width="1" fill="none"/></svg>
<div class="t" style="left:931px;top:366px;font-size:13.4px;color:#c8c8c8">AxisRoot</div>
<div class="t lk" style="left:1195px;top:365px;transform:scaleY(1.1);transform-origin:0 10%">블루프린트에서 편집</div>
<div class="a" style="left:869px;top:384px;width:440px;height:24px;background:#171717"></div>
<svg style="left:919px;top:388px" width="16" height="16"><path d="M1 1H8L6 3L13 10L10 13L3 6L1 8Z" fill="#c8c8c8"/><path d="M1 13Q3 10 7 13" stroke="#666" stroke-width="1" fill="none"/></svg>
<div class="t" style="left:941px;top:390px;font-size:13.4px;color:#c8c8c8">Axis_Y</div>
<div class="t lk" style="left:1195px;top:389px;transform:scaleY(1.1);transform-origin:0 10%">블루프린트에서 편집</div>
<div class="a" style="left:869px;top:408px;width:440px;height:24px;background:#1b1b1b"></div>
<svg style="left:919px;top:412px" width="16" height="16"><path d="M1 1H8L6 3L13 10L10 13L3 6L1 8Z" fill="#c8c8c8"/><path d="M1 13Q3 10 7 13" stroke="#666" stroke-width="1" fill="none"/></svg>
<div class="t" style="left:941px;top:414px;font-size:13.4px;color:#c8c8c8">Axis_X</div>
<div class="t lk" style="left:1195px;top:413px;transform:scaleY(1.1);transform-origin:0 10%">블루프린트에서 편집</div>
<div class="a" style="left:869px;top:432px;width:440px;height:24px;background:#171717"></div>
<svg style="left:919px;top:436px" width="16" height="16"><path d="M1 1H8L6 3L13 10L10 13L3 6L1 8Z" fill="#c8c8c8"/><path d="M1 13Q3 10 7 13" stroke="#666" stroke-width="1" fill="none"/></svg>
<div class="t" style="left:941px;top:438px;font-size:13.4px;color:#c8c8c8">Axis_Z</div>
<div class="t lk" style="left:1195px;top:437px;transform:scaleY(1.1);transform-origin:0 10%">블루프린트에서 편집</div>



<!-- details search & filters -->
<div class="a" style="left:870px;top:493px;width:362px;height:22px;background:#0f0f0f;border:1px solid #2a2a2a;border-radius:11px"></div>
<svg style="left:875px;top:496px" width="16" height="16"><circle cx="6.5" cy="6.5" r="5" fill="none" stroke="#c8c8c8" stroke-width="1.8"/><path d="M10 10L14.5 14.5" stroke="#c8c8c8" stroke-width="2"/></svg>
<div class="t k" style="left:897px;top:497px;font-size:13px;color:#6a6a6a;transform:scaleY(1.1);transform-origin:0 10%">검색</div>
<svg style="left:1246px;top:497px" width="15" height="15"><rect x="0.8" y="0.8" width="12.6" height="12.6" fill="none" stroke="#c8c8c8" stroke-width="1.6"/><rect x="2" y="2" width="10.2" height="1.8" fill="#c8c8c8"/><path d="M0 6.5H14M0 10.5H14M7.1 5V14" stroke="#c8c8c8" stroke-width="1.6"/></svg>
<svg style="left:1272px;top:496px" width="16" height="16"><path d="M8 0.5L10.2 5.5L15.5 6L11.5 9.6L12.7 15L8 12.2L3.3 15L4.5 9.6L0.5 6L5.8 5.5Z" fill="#d0d0d0"/></svg>
<svg style="left:1297px;top:496px" width="16" height="16"><path d="M11.50 8.00L15.20 8.00M10.47 10.47L13.09 13.09M8.00 11.50L8.00 15.20M5.53 10.47L2.91 13.09M4.50 8.00L0.80 8.00M5.53 5.53L2.91 2.91M8.00 4.50L8.00 0.80M10.47 5.53L13.09 2.91" stroke="#c8c8c8" stroke-width="2.2"/><circle cx="8" cy="8" r="4.6" fill="#242424" stroke="#c8c8c8" stroke-width="1.8"/><circle cx="8" cy="8" r="2" fill="none" stroke="#8a8a8a" stroke-width="0.9"/></svg>
<div class="a" style="left:871px;top:524px;width:51px;height:19px;background:#2b2b2b;border:1px solid #141414;border-radius:3px"></div>
<div class="t" style="left:871px;width:51px;text-align:center;top:527px;font-size:12px;color:#c8c8c8;transform:scaleY(1.1);transform-origin:0 10%">일반</div>
<div class="a" style="left:928px;top:524px;width:50px;height:19px;background:#2b2b2b;border:1px solid #141414;border-radius:3px"></div>
<div class="t" style="left:928px;width:50px;text-align:center;top:527px;font-size:12px;color:#c8c8c8;transform:scaleY(1.1);transform-origin:0 10%">액터</div>
<div class="a" style="left:984px;top:524px;width:51px;height:19px;background:#2b2b2b;border:1px solid #141414;border-radius:3px"></div>
<div class="t" style="left:984px;width:51px;text-align:center;top:527px;font-size:12px;color:#c8c8c8">LOD</div>
<div class="a" style="left:1040px;top:524px;width:51px;height:19px;background:#2b2b2b;border:1px solid #141414;border-radius:3px"></div>
<div class="t" style="left:1040px;width:51px;text-align:center;top:527px;font-size:12px;color:#c8c8c8;transform:scaleY(1.1);transform-origin:0 10%">기타</div>
<div class="a" style="left:1097px;top:524px;width:60px;height:19px;background:#2b2b2b;border:1px solid #141414;border-radius:3px"></div>
<div class="t" style="left:1097px;width:60px;text-align:center;top:527px;font-size:12px;color:#c8c8c8;transform:scaleY(1.1);transform-origin:0 10%">피직스</div>
<div class="a" style="left:1163px;top:524px;width:60px;height:19px;background:#2b2b2b;border:1px solid #141414;border-radius:3px"></div>
<div class="t" style="left:1163px;width:60px;text-align:center;top:527px;font-size:12px;color:#c8c8c8;transform:scaleY(1.1);transform-origin:0 10%">렌더링</div>
<div class="a" style="left:1228px;top:524px;width:72px;height:19px;background:#2b2b2b;border:1px solid #141414;border-radius:3px"></div>
<div class="t" style="left:1228px;width:72px;text-align:center;top:527px;font-size:12px;color:#c8c8c8;transform:scaleY(1.1);transform-origin:0 10%">스트리밍</div>
<div class="a" style="left:871px;top:549px;width:51px;height:19px;background:#0e6fe0;border:1px solid #141414;border-radius:3px"></div>
<div class="t" style="left:871px;width:51px;text-align:center;top:552px;font-size:12px;color:#f0f0f0;transform:scaleY(1.1);transform-origin:0 10%">전체</div>

<div class="a" style="left:863px;top:576px;width:436px;height:26px;background:#2e2e2e"></div>
<svg style="left:868px;top:585px" width="10" height="8"><path d="M0 0H10L5 7Z" fill="#8a8a8a"/></svg>
<div class="t" style="left:885.0px;top:582px;font-size:10.31px;color:#e4e4e4;transform:scaleY(1.1);transform-origin:0 10%">트랜스폼</div>
<div class="a" style="left:863px;top:602px;width:436px;height:82px;background:#1f1f1f"></div>
<div class="a" style="left:863px;top:629px;width:436px;height:1px;background:#191919"></div>
<div class="a" style="left:863px;top:656px;width:436px;height:1px;background:#191919"></div>
<div class="a" style="left:1014px;top:602px;width:1px;height:82px;background:#191919"></div>
<div class="a" style="left:863px;top:684px;width:436px;height:26px;background:#2e2e2e"></div>
<svg style="left:868px;top:693px" width="10" height="8"><path d="M0 0H10L5 7Z" fill="#8a8a8a"/></svg>
<div class="t" style="left:885.0px;top:690px;font-size:10.32px;color:#e4e4e4;transform:scaleY(1.1);transform-origin:0 10%">디폴트</div>
<div class="a" style="left:863px;top:710px;width:436px;height:26px;background:#1f1f1f"></div>
<div class="a" style="left:1014px;top:710px;width:1px;height:26px;background:#191919"></div>
<div class="t" style="left:885.0px;top:717px;font-size:12.5px;color:#c8c8c8;letter-spacing:-0.73px">Actor ID</div>
<div class="a" style="left:1028px;top:714px;width:246px;height:20px;background:#0f0f0f;border:1px solid #2a2a2a;border-radius:4px"></div>
<div class="t" style="left:1036.0px;top:718px;font-size:12px;color:#d0d0d0;letter-spacing:-1.3px">DT_05</div>
<svg style="left:1281px;top:717px" width="13" height="10"><path d="M12 9V6.5Q12 4 9 4H2M4.5 1L1.5 4L4.5 7" fill="none" stroke="#c0c0c0" stroke-width="1.5"/></svg>
<div class="a" style="left:1299px;top:576px;width:14px;height:160px;background:#1c1c1c"></div>
<div class="a" style="left:1303px;top:578px;width:8px;height:160px;background:#5a5a5a;border-radius:4px"></div>
<div class="a" style="left:1276px;top:602px;width:1px;height:82px;background:#191919"></div>
<div class="a" style="left:1276px;top:710px;width:1px;height:26px;background:#191919"></div>
<div class="a" style="left:886px;top:605px;width:85px;height:21px;background:#0f0f0f;border:1px solid #2b2b2b;border-radius:4px"></div>
<div class="t" style="left:893.0px;top:610px;font-size:10.13px;color:#d0d0d0;transform:scaleY(1.1);transform-origin:0 10%">위치</div>
<svg style="left:948px;top:613px" width="10" height="6"><path d="M1 1L5 5L9 1" fill="none" stroke="#d0d0d0" stroke-width="1.6"/></svg>
<div class="a" style="left:1028px;top:605px;width:81px;height:21px;background:#0f0f0f;border:1px solid #2a2a2a;border-radius:4px"></div>
<div class="a" style="left:1030px;top:609px;width:2px;height:13px;background:#d8401c;border-radius:1px"></div>
<div class="t" style="left:1036.0px;top:610px;font-size:12px;color:#d8d8d8;letter-spacing:-0.5px">-200.0</div>
<div class="a" style="left:1110px;top:605px;width:81px;height:21px;background:#0f0f0f;border:1px solid #2a2a2a;border-radius:4px"></div>
<div class="a" style="left:1112px;top:609px;width:2px;height:13px;background:#70b020;border-radius:1px"></div>
<div class="t" style="left:1118px;top:610px;font-size:12px;color:#d8d8d8">0.0</div>
<div class="a" style="left:1193px;top:605px;width:81px;height:21px;background:#0f0f0f;border:1px solid #2a2a2a;border-radius:4px"></div>
<div class="a" style="left:1195px;top:609px;width:2px;height:13px;background:#2d86e8;border-radius:1px"></div>
<div class="t" style="left:1201px;top:610px;font-size:12px;color:#d8d8d8">0.0</div>
<svg style="left:1281px;top:611px" width="13" height="10"><path d="M12 9V6.5Q12 4 9 4H2M4.5 1L1.5 4L4.5 7" fill="none" stroke="#c0c0c0" stroke-width="1.5"/></svg>
<div class="a" style="left:886px;top:632px;width:85px;height:21px;background:#0f0f0f;border:1px solid #2b2b2b;border-radius:4px"></div>
<div class="t" style="left:893.0px;top:637px;font-size:9.98px;color:#d0d0d0;transform:scaleY(1.1);transform-origin:0 10%">회전</div>
<svg style="left:948px;top:640px" width="10" height="6"><path d="M1 1L5 5L9 1" fill="none" stroke="#d0d0d0" stroke-width="1.6"/></svg>
<div class="a" style="left:1028px;top:632px;width:81px;height:21px;background:#0f0f0f;border:1px solid #2a2a2a;border-radius:4px"></div>
<div class="a" style="left:1030px;top:636px;width:2px;height:13px;background:#d8401c;border-radius:1px"></div>
<div class="t" style="left:1036px;top:637px;font-size:12px;color:#d8d8d8">0.0 °</div>
<div class="a" style="left:1110px;top:632px;width:81px;height:21px;background:#0f0f0f;border:1px solid #2a2a2a;border-radius:4px"></div>
<div class="a" style="left:1112px;top:636px;width:2px;height:13px;background:#70b020;border-radius:1px"></div>
<div class="t" style="left:1118px;top:637px;font-size:12px;color:#d8d8d8">0.0 °</div>
<div class="a" style="left:1193px;top:632px;width:81px;height:21px;background:#0f0f0f;border:1px solid #2a2a2a;border-radius:4px"></div>
<div class="a" style="left:1195px;top:636px;width:2px;height:13px;background:#2d86e8;border-radius:1px"></div>
<div class="t" style="left:1202.4px;top:637px;font-size:12px;color:#d8d8d8;letter-spacing:-0.68px">-90.0 °</div>
<svg style="left:1281px;top:638px" width="13" height="10"><path d="M12 9V6.5Q12 4 9 4H2M4.5 1L1.5 4L4.5 7" fill="none" stroke="#c0c0c0" stroke-width="1.5"/></svg>
<div class="a" style="left:886px;top:659px;width:85px;height:21px;background:#0f0f0f;border:1px solid #2b2b2b;border-radius:4px"></div>
<div class="t" style="left:893.0px;top:664px;font-size:10.51px;color:#d0d0d0;transform:scaleY(1.1);transform-origin:0 10%">스케일</div>
<svg style="left:948px;top:667px" width="10" height="6"><path d="M1 1L5 5L9 1" fill="none" stroke="#d0d0d0" stroke-width="1.6"/></svg>
<svg style="left:979px;top:663px" width="12" height="13"><path d="M3 6V4A3 3 0 0 1 9 4V6" fill="none" stroke="#f0f0f0" stroke-width="1.8"/><rect x="0" y="6" width="12" height="7" fill="#f0f0f0"/><rect x="5.3" y="8" width="1.4" height="3" fill="#1f1f1f"/></svg>
<div class="a" style="left:1028px;top:659px;width:81px;height:21px;background:#0f0f0f;border:1px solid #2a2a2a;border-radius:4px"></div>
<div class="a" style="left:1030px;top:663px;width:2px;height:13px;background:#d8401c;border-radius:1px"></div>
<div class="t" style="left:1036px;top:664px;font-size:12px;color:#d8d8d8">1.0</div>
<div class="a" style="left:1110px;top:659px;width:81px;height:21px;background:#0f0f0f;border:1px solid #2a2a2a;border-radius:4px"></div>
<div class="a" style="left:1112px;top:663px;width:2px;height:13px;background:#70b020;border-radius:1px"></div>
<div class="t" style="left:1118px;top:664px;font-size:12px;color:#d8d8d8">1.0</div>
<div class="a" style="left:1193px;top:659px;width:81px;height:21px;background:#0f0f0f;border:1px solid #2a2a2a;border-radius:4px"></div>
<div class="a" style="left:1195px;top:663px;width:2px;height:13px;background:#2d86e8;border-radius:1px"></div>
<div class="t" style="left:1201px;top:664px;font-size:12px;color:#d8d8d8">1.0</div>

<!-- content browser -->
<div class="a" style="left:4px;top:605px;width:160px;height:25px;background:#242424;border-radius:5px 5px 0 0"></div>
<svg style="left:8px;top:607px" width="19" height="17"><path d="M0 0H6L8 2H13V3H0Z" fill="#8a8a8a"/><path d="M0 3H15V8A5 5 0 0 0 9 14H0Z" fill="#b4b4b4"/><circle cx="13" cy="11" r="3.8" fill="none" stroke="#c8c8c8" stroke-width="1.5"/><path d="M10.5 13.5L7.5 16.5" stroke="#c8c8c8" stroke-width="1.6"/></svg>
<div class="t" style="left:30.3px;top:611px;font-size:12.48px;color:#d0d0d0;transform:scaleY(1.1);transform-origin:0 10%">콘텐츠 브라우저</div>
<svg style="left:143px;top:613px" width="7" height="7"><path d="M0.5 0.5L6.5 6.5M6.5 0.5L0.5 6.5" stroke="#d0d0d0" stroke-width="1.5"/></svg>
<div class="a" style="left:4px;top:629px;width:852px;height:107px;background:#242424"></div>
<div class="a" style="left:17px;top:635px;width:70px;height:27px;background:#383838;border:1px solid #1a1a1a;border-radius:4px"></div>
<svg style="left:31px;top:642px" width="13" height="13"><path d="M6.5 0V13M0 6.5H13" stroke="#7ec04a" stroke-width="2.2"/></svg>
<div class="t" style="left:49.0px;top:642px;font-size:11.7px;color:#e0e0e0;transform:scaleY(1.1);transform-origin:0 10%">추가</div>
<svg style="left:98px;top:642px" width="21" height="14"><path d="M3 4Q10 0 20 3L18 11Q10 14 1 12Z" fill="#c8c8c8"/><path d="M5 6H8M5 6V9M11 6L10 9M13 6V9M13 6H15V7.5H13" stroke="#242424" stroke-width="1.1" fill="none"/></svg>
<div class="t" style="left:123.0px;top:642px;font-size:13px;color:#d0d0d0;letter-spacing:-0.8px">Fab</div>
<svg style="left:170px;top:640px" width="16" height="17"><path d="M1 7V16H15V7" fill="none" stroke="#c0c0c0" stroke-width="1.6"/><path d="M4 1Q9 1 9 9M5.5 6.5L9 10L12.5 6.5" fill="none" stroke="#c0c0c0" stroke-width="1.7"/></svg>
<div class="t" style="left:190.0px;top:642px;font-size:11.69px;color:#d0d0d0;transform:scaleY(1.1);transform-origin:0 10%">임포트</div>
<svg style="left:244px;top:641px" width="14" height="16"><path d="M3 0H14V13H11" fill="none" stroke="#9a9a9a" stroke-width="1.4"/><path d="M0 3H9L11 5V16H0Z" fill="#b0b0b0"/><rect x="2" y="3" width="6" height="4" fill="#242424"/></svg>
<div class="t" style="left:261.0px;top:642px;font-size:12.65px;color:#d0d0d0;transform:scaleY(1.1);transform-origin:0 10%">모두 저장</div>
<svg style="left:330px;top:640px" width="16" height="16"><circle cx="8" cy="8" r="7" fill="none" stroke="#c0c0c0" stroke-width="1.5"/><path d="M12 8H4.5M7.5 5L4.5 8L7.5 11" fill="none" stroke="#c0c0c0" stroke-width="1.5"/></svg>
<svg style="left:354px;top:640px" width="16" height="16"><circle cx="8" cy="8" r="7" fill="none" stroke="#707070" stroke-width="1.5"/><path d="M4 8H11.5M8.5 5L11.5 8L8.5 11" fill="none" stroke="#707070" stroke-width="1.5"/></svg>
<svg style="left:377px;top:642px" width="18" height="14"><path d="M0 0H6L8 2H18V14H0Z" fill="#c0c0c0"/><path d="M0 4H18" stroke="#242424" stroke-width="1"/></svg>
<div class="t" style="left:403.0px;top:642px;font-size:13px;color:#d0d0d0;letter-spacing:-0.3px">All</div>
<svg style="left:430px;top:642px" width="7" height="11"><path d="M1 1L5.5 5.5L1 10" fill="none" stroke="#c8c8c8" stroke-width="1.6"/></svg>
<div class="t" style="left:450.8px;top:642px;font-size:13px;color:#d0d0d0;letter-spacing:-0.18px">Plugins</div>
<svg style="left:507px;top:642px" width="7" height="11"><path d="M1 1L5.5 5.5L1 10" fill="none" stroke="#c8c8c8" stroke-width="1.6"/></svg>
<div class="t" style="left:526.9px;top:642px;font-size:13px;color:#d0d0d0;letter-spacing:-0.2px">IMVRFrameworkPlugin 콘텐츠</div>
<svg style="left:712px;top:642px" width="7" height="11"><path d="M1 1L5.5 5.5L1 10" fill="none" stroke="#c8c8c8" stroke-width="1.6"/></svg>
<div class="a" style="left:725px;top:636px;width:58px;height:26px;overflow:hidden"><div class="t" style="left:7.6px;top:6px;font-size:13px;color:#d0d0d0;letter-spacing:-0.3px">IMBuilder</div></div>
<div class="a" style="left:783px;top:637px;width:1px;height:24px;background:#1c1c1c"></div>
<svg style="left:797px;top:641px" width="16" height="16"><circle cx="8" cy="8" r="5.3" fill="none" stroke="#d0d0d0" stroke-width="2.6" stroke-dasharray="2.1 2.06"/><circle cx="8" cy="8" r="4.3" fill="#242424" stroke="#d0d0d0" stroke-width="1.5"/><circle cx="8" cy="8" r="1.8" fill="none" stroke="#a0a0a0" stroke-width="1"/></svg>
<div class="t" style="left:821.2px;top:642px;font-size:12.35px;color:#d0d0d0;transform:scaleY(1.1);transform-origin:0 10%">세팅</div>
<div class="a" style="left:4px;top:668px;width:852px;height:68px;background:#1b1b1b"></div>
<div class="a" style="left:8px;top:674px;width:240px;height:29px;background:#2f2f2f"></div>
<svg style="left:17px;top:683px" width="7" height="11"><path d="M0 0L6.5 5.5L0 11Z" fill="#9a9a9a"/></svg>
<div class="t" style="left:31.0px;top:681px;font-size:12.61px;color:#d0d0d0;transform:scaleY(1.1);transform-origin:0 10%">즐겨찾기</div>
<svg style="left:220px;top:680px" width="16" height="16"><circle cx="6.5" cy="6.5" r="5.3" fill="none" stroke="#c8c8c8" stroke-width="1.7"/><path d="M10.3 10.3L15 15" stroke="#c8c8c8" stroke-width="1.9"/></svg>
<div class="a" style="left:8px;top:705px;width:240px;height:26px;background:#2f2f2f"></div>
<svg style="left:15px;top:716px" width="10" height="7"><path d="M0 0H10L5 6.5Z" fill="#9a9a9a"/></svg>
<div class="t" style="left:31.5px;top:712px;font-size:13px;font-weight:bold;color:#d8d8d8;letter-spacing:-0.77px">KPTiB_SpaceAccident</div>
<svg style="left:220px;top:711px" width="16" height="16"><circle cx="6.5" cy="6.5" r="5.3" fill="none" stroke="#c8c8c8" stroke-width="1.7"/><path d="M10.3 10.3L15 15" stroke="#c8c8c8" stroke-width="1.9"/></svg>
<div class="a" style="left:10px;top:732px;width:236px;height:4px;background:#1e2838"></div>
<div class="a" style="left:252px;top:668px;width:4px;height:68px;background:#151515"></div>
<div class="a" style="left:256px;top:674px;width:95px;height:62px;background:#242424"></div>
<div class="a" style="left:256px;top:674px;width:95px;height:26px;background:#2f2f2f"></div>
<div class="t" style="left:263.0px;top:681px;font-size:13.13px;color:#d8d8d8;transform:scaleY(1.1);transform-origin:0 10%">필터</div>
<div class="a" style="left:260px;top:705px;width:75px;height:24px;background:#383838;border:1px solid #1c1c1c;border-radius:4px;overflow:hidden"></div>
<div class="a" style="left:261px;top:706px;width:8px;height:22px;background:#0f0f0f;border-radius:3px 0 0 3px"></div>
<div class="a" style="left:260px;top:705px;width:75px;height:24px;overflow:hidden"><div class="t" style="left:14px;top:6px;font-size:13px;color:#6e6e6e;transform:scaleY(1.1);transform-origin:0 10%">위젯 블루프린트</div></div>
<div class="a" style="left:260px;top:731px;width:75px;height:8px;background:#383838;border-radius:4px"></div>
<div class="a" style="left:341px;top:705px;width:8px;height:31px;background:#4a4a4a;border-radius:4px"></div>
<div class="a" style="left:351px;top:668px;width:5px;height:68px;background:#151515"></div>
<div class="a" style="left:356px;top:668px;width:500px;height:68px;background:#242424"></div>
<svg style="left:363px;top:680px" width="15" height="13"><path d="M0 1H15M3 6H12M5.5 11H9.5" stroke="#d0d0d0" stroke-width="2"/></svg>
<svg style="left:386px;top:684px" width="10" height="6"><path d="M1 1L5 5L9 1" fill="none" stroke="#d0d0d0" stroke-width="1.5"/></svg>
<div class="a" style="left:403px;top:676px;width:453px;height:21px;background:#0f0f0f;border-radius:10px 0 0 10px;border:1px solid #2a2a2a;border-right:none"></div>
<svg style="left:408px;top:678px" width="16" height="16"><circle cx="6.5" cy="6.5" r="5.3" fill="none" stroke="#d0d0d0" stroke-width="1.7"/><path d="M10.3 10.3L15 15" stroke="#d0d0d0" stroke-width="1.9"/></svg>
<div class="t" style="left:431.0px;top:680px;font-size:13px;color:#6a6a6a;letter-spacing:-0.39px">검색 IMBuilder</div>
<div class="a" style="left:370px;top:704px;width:88px;height:32px;background:#1a1a1a;border-radius:4px 4px 0 0"></div>
<div class="a" style="left:390px;top:718px;width:50px;height:50px;border-radius:50%;background:radial-gradient(circle at 50% 25%,#ffffff,#b0b0b0 40%,#555 80%)"></div>
<div class="a" style="left:489px;top:705px;width:85px;height:31px;background:repeating-conic-gradient(#111 0 25%,#181818 0 50%) 0 0/14px 14px"></div>
<svg style="left:495px;top:718px" width="50" height="18"><path d="M3 2H22M26 2H42V12" fill="none" stroke="#d0d0d0" stroke-width="0.8"/></svg>
<div class="a" style="left:607px;top:705px;width:85px;height:31px;background:repeating-conic-gradient(#111 0 25%,#181818 0 50%) 0 0/14px 14px"></div>
<svg style="left:640px;top:720px" width="10" height="10"><path d="M1 8Q1 3 5 2" fill="none" stroke="#b0d0d0" stroke-width="1.3"/></svg>
<div class="a" style="left:725px;top:705px;width:86px;height:31px;background:repeating-conic-gradient(#111 0 25%,#181818 0 50%) 0 0/14px 14px"></div>
<svg style="left:745px;top:724px" width="30" height="14"><path d="M2 14Q2 2 10 2Q17 2 17 14" fill="none" stroke="#a0c8c0" stroke-width="2"/></svg>
<div class="a" style="left:835px;top:706px;width:8px;height:30px;background:#4a4a4a;border-radius:4px"></div>

</body></html>
